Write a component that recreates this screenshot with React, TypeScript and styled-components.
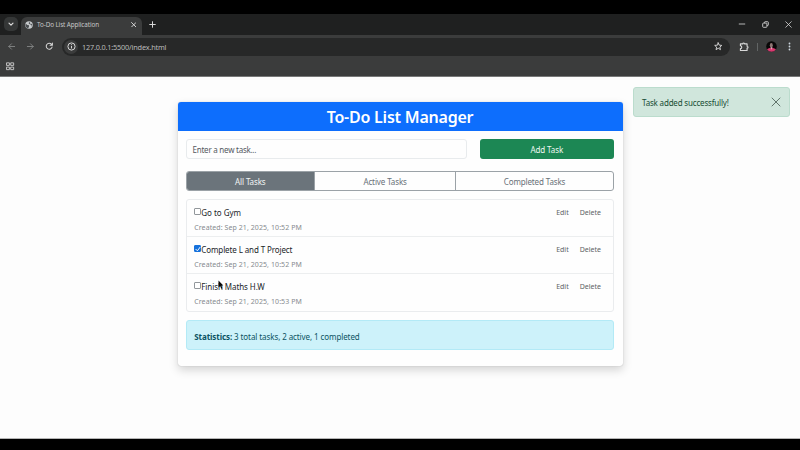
import React from "react";
import styled, { createGlobalStyle } from "styled-components";

const Global = createGlobalStyle`
  * { box-sizing: border-box; }
  body { margin: 0; background: #000; overflow: hidden; }
`;

const Screen = styled.div`
  width: 800px;
  height: 450px;
  padding-top: 14px;
  display: flex;
  flex-direction: column;
  background: #000;
  font-family: "Noto Sans", "Open Sans", sans-serif;
  font-size: 8px;
  color: #212529;
`;

const Label = styled.span<{ $ls?: number }>`
  white-space: nowrap;
  letter-spacing: ${(p) => p.$ls ?? 0}px;
`;

const TabStrip = styled.header`
  height: 21px;
  flex: none;
  display: flex;
  align-items: flex-end;
  background: #1f2020;
  color: #dcdcdc;
`;

const TabSearch = styled.div`
  width: 14px;
  height: 14px;
  margin: 0 3px 4px 4px;
  border-radius: 5px;
  background: #353737;
  display: grid;
  place-items: center;
`;

const BrowserTab = styled.div`
  width: 121px;
  height: 18px;
  padding: 0 6px 3px 4px;
  border-radius: 6px 6px 0 0;
  background: #3b3c3c;
  display: flex;
  align-items: center;
  gap: 4px;
  font-size: 6.3px;
  color: #c6c7c7;
  & > :last-child { margin-left: auto; }
`;

const NewTab = styled.div`
  display: flex;
  margin: 0 auto 7px 7px;
`;

const WindowButtons = styled.div`
  display: flex;
  align-items: center;
  gap: 16px;
  padding: 0 8.5px 7px 0;
`;

const Toolbar = styled.div`
  height: 23px;
  flex: none;
  display: flex;
  align-items: center;
  background: #3b3c3c;
  color: #d8d8d8;
  padding: 0 6.5px;
`;

const NavIcons = styled.div`
  display: flex;
  gap: 10px;
  width: 55.5px;
`;

const AddressBar = styled.div`
  width: 668px;
  height: 18px;
  border-radius: 9px;
  background: #272828;
  display: flex;
  align-items: center;
  padding: 0 8px 0 2px;
  gap: 4px;
  font-size: 7.3px;
  & > :last-child { margin-left: auto; }
`;

const Url = styled.span`
  color: #b9baba;
  letter-spacing: -0.18px;
  white-space: nowrap;
`;

const SiteInfo = styled.div`
  width: 14px;
  height: 14px;
  border-radius: 50%;
  background: #3b3c3c;
  display: grid;
  place-items: center;
`;

const Actions = styled.div`
  display: flex;
  flex: 1;
  align-items: center;
  padding-left: 9px;
`;

const Divider = styled.i`
  width: 1px;
  height: 8px;
  margin: 0 8px 0 8px;
  background: #626565;
`;

const Avatar = styled.svg`
  margin-right: 11px;
`;

const Bookmarks = styled.div`
  height: 19px;
  flex: none;
  padding: 4px 6px 0;
  display: flex;
  align-items: flex-start;
  background: #3b3c3c;
  border-bottom: 1px solid #777878;
  color: #c8c8c8;
`;

const Page = styled.main`
  position: relative;
  height: 362px;
  flex: none;
  padding-top: 25px;
  background: #fdfdfd;
  border-bottom: 1px solid #b5b5b5;
`;

const Card = styled.section`
  width: 445px;
  height: 264.4px;
  margin-left: 177.5px;
  border-radius: 3px;
  background: #fefefe;
  box-shadow: 0 4px 10px rgba(0, 0, 0, 0.17), 0 0 1px rgba(0, 0, 0, 0.3);
`;

const CardHeader = styled.h2`
  height: 29px;
  margin: 0;
  padding-top: 1px;
  border-radius: 3px 3px 0 0;
  background: #0d6efd;
  color: #fff;
  font-size: 16px;
  font-weight: 600;
  display: flex;
  align-items: center;
  justify-content: center;
`;

const CardBody = styled.div`
  padding: 8px 8.5px 0 8.1px;
  display: flex;
  flex-direction: column;
`;

const EntryRow = styled.div`
  display: grid;
  grid-template-columns: 281.5px 134.5px;
  justify-content: space-between;
  height: 20px;
  margin-bottom: 12px;
`;

const EntryField = styled.div`
  border: 1px solid #e8ebed;
  border-radius: 3px;
  padding: 1px 6px 0;
  display: flex;
  align-items: center;
  color: #54595e;
`;

const AddButton = styled.button`
  border: 0;
  border-radius: 3px;
  padding: 1px 0 0;
  background: #1c8754;
  color: #eef7f2;
  font: inherit;
`;

const Filters = styled.div`
  height: 20px;
  display: grid;
  grid-template-columns: 127.5px 141px 1fr;
  border: 1px solid #9ba2a7;
  border-radius: 3px;
  overflow: hidden;
  margin-bottom: 8px;
`;

const Filter = styled.button<{ $active?: boolean }>`
  border: 0;
  border-left: ${(p) => (p.$active ? "0" : "1px solid #9ba2a7")};
  padding: 1px 0 0;
  font: inherit;
  background: ${(p) => (p.$active ? "#6b747b" : "transparent")};
  color: ${(p) => (p.$active ? "#f2f4f5" : "#697178")};
`;

const List = styled.ul`
  list-style: none;
  margin: 0 0 8px;
  padding: 0;
  height: 113px;
  border: 1px solid #eaecee;
  border-radius: 3px;
`;

const Item = styled.li`
  height: 37.2px;
  padding: 5px 12px 0 7.7px;
  display: flex;
  justify-content: space-between;
  box-shadow: inset 0 -1px #eceeef;
  &:last-child { box-shadow: none; }
`;

const ItemTitle = styled.div`
  height: 15px;
  display: flex;
  align-items: center;
  line-height: 15px;
`;

const Created = styled.div`
  height: 14px;
  line-height: 15px;
  font-size: 7px;
  color: #858a8e;
`;

const ItemActions = styled.div`
  display: flex;
  gap: 11px;
  line-height: 15px;
  font-size: 7px;
  color: #5d6265;
`;

const Check = styled.span<{ $on?: boolean }>`
  width: 7px;
  height: 7px;
  margin: -2px 0 0 0;
  border: 1px solid ${(p) => (p.$on ? "#1672dc" : "#92979b")};
  border-radius: 1px;
  background: ${(p) => (p.$on ? "#1672dc" : "#fff")};
  display: grid;
  place-items: center;
`;

const Stats = styled.div`
  height: 30px;
  padding: 2px 8px 0 7.7px;
  border: 1px solid #b3eaf6;
  border-radius: 3px;
  background: #cdf2fa;
  color: #0b5262;
  display: flex;
  align-items: center;
`;

const Toast = styled.div`
  position: absolute;
  left: 633px;
  top: 10px;
  width: 157px;
  height: 30.4px;
  padding: 1px 8px 0 8px;
  border: 1px solid #bbdccd;
  border-radius: 3px;
  background: #d0e6dc;
  color: #174c34;
  display: flex;
  align-items: center;
  justify-content: space-between;
  & > svg { margin-top: -2px; }
`;

const Cursor = styled.svg`
  position: absolute;
  left: 218px;
  top: 203px;
`;

const Stroke = ({ d, s = 8, w = 1, c = "currentColor" }: { d: string; s?: number; w?: number; c?: string }) => (
  <svg width={s} height={s} viewBox="0 0 10 10" fill="none" stroke={c} strokeWidth={w} strokeLinecap="round" strokeLinejoin="round">
    <path d={d} />
  </svg>
);

const CROSS = "M1 1l8 8M9 1l-8 8";

const tasks = [
  { title: "Go to Gym", at: "10:52", done: false, ls: -0.03 },
  { title: "Complete L and T Project", at: "10:52", done: true, ls: -0.11 },
  { title: "Finish Maths H.W", at: "10:53", done: false, ls: -0.08 },
];

export default function App() {
  return (
    <Screen>
      <Global />
      <TabStrip>
        <TabSearch><Stroke d="M2.5 4l2.5 2.5L7.5 4" w={1.5} /></TabSearch>
        <BrowserTab>
          <svg width="8" height="8" viewBox="0 0 10 10">
            <circle cx="5" cy="5" r="4.7" fill="#c6c9cb" />
            <path d="M1 3.5l2 1.5 2 .4v1.6l-1 2.2C2 8.800.7 7 .7 5zM5.5 1l-1 1.800 1.500 1.200 2-.6 1 1.200-1.500 1.500 1 1.200" fill="#494d50" />
          </svg>
          <Label $ls={-0.09}>To-Do List Application</Label>
          <Stroke d={CROSS} s={5.5} w={1.7} c="#dcdcdc" />
        </BrowserTab>
        <NewTab><Stroke d="M5 1v8M1 5h8" s={7} w={1.4} /></NewTab>
        <WindowButtons>
          <Stroke d="M1.500 5h7" w={1} />
          <svg width="7" height="7" viewBox="0 0 10 10" fill="none" stroke="currentColor" strokeWidth="1.2">
            <rect x="1" y="3" width="6" height="6" rx="1" />
            <path d="M3.500 3V2q0-1 1-1H8q1 0 1 1v3.500q0 1-1 1H7" />
          </svg>
          <Stroke d={CROSS} s={7} w={1.1} />
        </WindowButtons>
      </TabStrip>
      <Toolbar>
        <NavIcons>
          <Stroke d="M8.500 5H2M5 2L2 5l3 3" s={9} c="#858787" />
          <Stroke d="M1.500 5H8M5 2l3 3-3 3" s={9} c="#858787" />
          <Stroke d="M8.300 6A3.500 3.500 0 1 1 7.500 2.600L8.500 3.700M8.700 1.200v2.600H6" s={8.5} w={1.2} />
        </NavIcons>
        <AddressBar>
          <SiteInfo>
            <svg width="9" height="9" viewBox="0 0 10 10" fill="none" stroke="currentColor" strokeWidth="1.1">
              <circle cx="5" cy="5" r="4" />
              <path d="M5 4.400v2.800M5 2.500v1" />
            </svg>
          </SiteInfo>
          <Url>127.0.0.1:5500/index.html</Url>
          <Stroke d="M5 1l1.200 2.700 3 .3-2.300 2 .7 3L5 7.400 2.400 9l.7-3L.8 4l3-.3z" s={8.5} w={1.1} />
        </AddressBar>
        <Actions>
          <Stroke d="M1.500 2H4Q4 1 5 1T6 2h2.500v2.500q1 0 1 1t-1 1V9h-7V7q1.400 0 1.400-1.500T1.500 4z" s={9.5} w={1.2} />
          <Divider />
          <Avatar width="11" height="11" viewBox="0 0 11 11">
            <circle cx="5.500" cy="5.500" r="5.300" fill="#090707" />
            <path d="M1 8.300Q3 6.500 5.500 6.800T10 8.300Q8.500 10.800 5.500 10.800T1 8.300" fill="#d83a70" />
            <ellipse cx="5.300" cy="4.300" rx="1.500" ry="2.300" fill="#8d7472" />
            <path d="M4.500 6.300h2L5.500 8.800z" fill="#d8bcc2" />
          </Avatar>
          <svg width="3" height="9" viewBox="0 0 3 9" fill="#ced7df">
            <circle cx="1.500" cy="1.500" r="0.9" /><circle cx="1.500" cy="4.500" r="0.9" /><circle cx="1.500" cy="7.500" r="0.9" />
          </svg>
        </Actions>
      </Toolbar>
      <Bookmarks>
        <Stroke d="M1 1h3v3H1zM6 1h3v3H6zM1 6h3v3H1zM6 6h3v3H6z" s={8.5} w={1.1} />
      </Bookmarks>
      <Page>
        <Card>
          <CardHeader><Label $ls={-0.22}>To-Do List Manager</Label></CardHeader>
          <CardBody>
            <EntryRow>
              <EntryField><Label $ls={-0.25}>Enter a new task...</Label></EntryField>
              <AddButton><Label $ls={-0.1}>Add Task</Label></AddButton>
            </EntryRow>
            <Filters>
              <Filter $active><Label $ls={-0.12}>All Tasks</Label></Filter>
              <Filter><Label $ls={-0.12}>Active Tasks</Label></Filter>
              <Filter><Label $ls={-0.13}>Completed Tasks</Label></Filter>
            </Filters>
            <List>
              {tasks.map((t) => (
                <Item key={t.title}>
                  <div>
                    <ItemTitle>
                      <Check $on={t.done}>{t.done && <Stroke d="M1.500 5.500L4 8l4.500-6" s={6} w={1.6} c="#fff" />}</Check>
                      <Label $ls={t.ls}>{t.title}</Label>
                    </ItemTitle>
                    <Created><Label $ls={0.08}>Created: Sep 21, 2025, {t.at} PM</Label></Created>
                  </div>
                  <ItemActions><Label>Edit</Label><Label>Delete</Label></ItemActions>
                </Item>
              ))}
            </List>
            <Stats><Label $ls={-0.09}><b>Statistics:</b> 3 total tasks, 2 active, 1 completed</Label></Stats>
          </CardBody>
        </Card>
        <Toast>
          <Label $ls={-0.18}>Task added successfully!</Label>
          <Stroke d={CROSS} s={10} w={1} c="#60746b" />
        </Toast>
        <Cursor width="6" height="10" viewBox="0 0 6 10">
          <path d="M.5.5v7l1.600-1.500 1.200 2.800 1.100-.5L3.300 5.500h2z" fill="#080808" />
        </Cursor>
      </Page>
    </Screen>
  );
}
